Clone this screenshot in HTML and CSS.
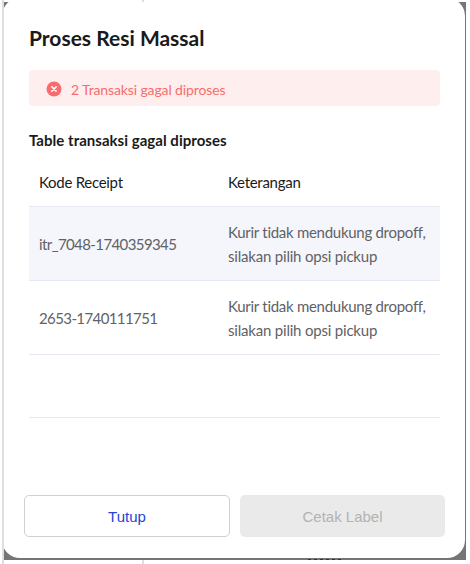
FILE: index.html
```html
<!DOCTYPE html>
<html lang="id">
<head>
<meta charset="utf-8">
<title>Proses Resi Massal</title>
<link rel="stylesheet" href="styles.css">
</head>
<body>
<div class="sheet">
  <div class="overlay">
    <i class="behind"></i>
    <section class="dialog">
      <h1 class="title">Proses Resi Massal</h1>
      <div class="alert">
        <svg class="alert-icon" viewBox="0 0 16 16"><circle cx="8" cy="8" r="7.5"/><path d="M5.9 5.9l4.2 4.2M10.1 5.9l-4.2 4.2"/></svg>
        <span>2 Transaksi gagal diproses</span>
      </div>
      <h2 class="subtitle">Table transaksi gagal diproses</h2>
      <div class="table">
        <div class="row head"><span>Kode Receipt</span><span>Keterangan</span></div>
        <div class="row tinted"><span class="code">itr_7048-1740359345</span><span>Kurir tidak mendukung dropoff,<br><span class="second">silakan pilih opsi pickup</span></span></div>
        <div class="row"><span class="code">2653-1740111751</span><span>Kurir tidak mendukung dropoff,<br><span class="second">silakan pilih opsi pickup</span></span></div>
        <div class="row empty"></div>
      </div>
      <div class="actions">
        <button class="btn close">Tutup</button>
        <button class="btn print" disabled>Cetak Label</button>
      </div>
    </section>
  </div>
</div>
</body>
</html>
```
FILE: styles.css
```css
* { box-sizing: border-box; }
body { margin: 0; background: #fff; font-family: Lato, "Noto Sans", sans-serif; }
.sheet {
  height: 564px;
  padding: 2px 4px;
  background:
    linear-gradient(#dedede, #dedede) 2px 0 / 2px 100% no-repeat,
    linear-gradient(#dedede, #dedede) 142px 0 / 2px 100% no-repeat,
    #fff;
}
.overlay { position: relative; height: 558px; overflow: hidden; background: #757575; }
.behind {
  position: absolute; left: 304px; bottom: 0; width: 35px; height: 1px;
  background: repeating-linear-gradient(90deg, #333 0 3px, #757575 3px 6px);
}
.dialog {
  height: 560px;
  margin: -4px 1px 0 -2px;
  padding: 25px 25px 0 27px;
  border-radius: 18px;
  background: #fff;
}
.title { margin: 0; height: 47px; font-size: 21px; line-height: 30px; font-weight: 700; color: #1a1a1a; }
.alert {
  display: flex; align-items: center; gap: 9px;
  height: 36px; padding: 2px 17px 0;
  border-radius: 4px; background: #feefee; color: #f96b6d;
  font-size: 14px; letter-spacing: -0.12px; white-space: nowrap;
}
.alert-icon { width: 16px; height: 16px; margin-top: -1px; fill: #f96b6d; stroke: #fff; stroke-width: 1.5; stroke-linecap: round; }
.alert-icon circle { stroke: none; }
.subtitle { margin: 22px 0 0; height: 30px; font-size: 15px; line-height: 25px; font-weight: 700; letter-spacing: 0.03px; color: #1a1a1a; }
.row {
  display: grid; grid-template-columns: 189px 1fr; align-items: center;
  height: 74px; padding: 1px 0 0 10px;
  border-bottom: 1px solid #e7e8f2;
  font-size: 15px; line-height: 24px; letter-spacing: -0.28px; color: #606266; white-space: nowrap;
}
.head { height: 49px; padding: 0 0 1px 10px; color: #1a1a1a; }
.tinted { background: #f5f6fb; }
.code { letter-spacing: -0.6px; }
.second { letter-spacing: -0.2px; }
.empty { height: 63px; }
.actions { display: grid; grid-template-columns: 206px 205px; gap: 10px; margin: 77px 0 0 -5px; }
.btn {
  height: 42px; padding: 0; border-radius: 5px;
  font: 15px "Liberation Sans", Arial, sans-serif;
}
.close { border: 1px solid #cfd0d1; background: #fff; color: #2446d2; }
.print { border: 0; background: #eaeaea; color: #b2b2b2; }
```
